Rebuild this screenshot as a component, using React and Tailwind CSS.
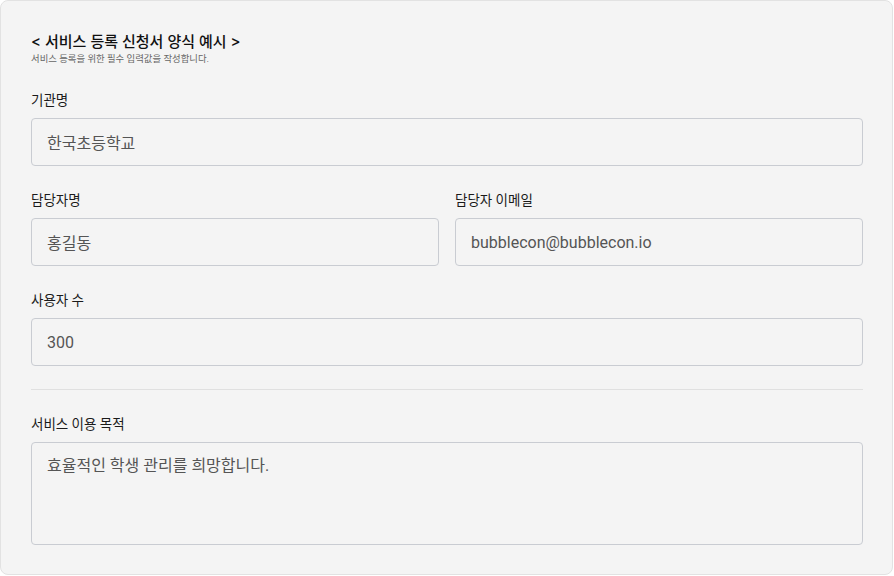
import React from 'react';

const font = { fontFamily: 'Roboto, "Noto Sans CJK KR", sans-serif' };

const Field = ({ label, value, className = '' }) => (
  <div className={`flex flex-col ${className}`}>
    <label className="text-[13.5px] leading-[18px] text-[#1a1a1a] mb-[9px]">{label}</label>
    <input
      readOnly
      value={value}
      className="h-[48px] w-full rounded-[4px] border border-[#c9ccd2] bg-[#f4f4f4] px-[15px] text-[16px] text-[#555] outline-none"
    />
  </div>
);

export default function App() {
  return (
    <div className="w-[894px] h-[576px] bg-white" style={font}>
      <div className="h-[575px] w-[893px] rounded-[8px] border border-[#e2e2e2] bg-[#f4f4f4] pl-[30px] pr-[29px] pt-[31px]">
        {/* Header */}
        <div className="flex flex-col">
          <h1 className="font-['Inter','Noto_Sans_CJK_KR',sans-serif] text-[15px] leading-[20px] font-medium text-[#111]">&lt; 서비스 등록 신청서 양식 예시 &gt;</h1>
          <p className="text-[9.4px] leading-[12px] text-[#666] mt-[1px]">서비스 등록을 위한 필수 입력값을 작성합니다.</p>
        </div>

        {/* Form */}
        <div className="mt-[26px] flex flex-col gap-[25px]">
          <Field label="기관명" value="한국초등학교" />
          <div className="grid grid-cols-2 gap-[16px]">
            <Field label="담당자명" value="홍길동" />
            <Field label="담당자 이메일" value="bubblecon@bubblecon.io" />
          </div>
          <Field label="사용자 수" value="300" />
        </div>

        <div className="mt-[23px] mb-[25px] h-px bg-[#e0e0e0]" />

        <div className="flex flex-col">
          <label className="text-[13.5px] leading-[18px] text-[#1a1a1a] mb-[9px]">서비스 이용 목적</label>
          <textarea
            readOnly
            value="효율적인 학생 관리를 희망합니다."
            className="h-[103px] w-full resize-none rounded-[4px] border border-[#c9ccd2] bg-[#f4f4f4] px-[15px] py-[12px] text-[16px] leading-[22px] text-[#555] outline-none"
          />
        </div>
      </div>
    </div>
  );
}
